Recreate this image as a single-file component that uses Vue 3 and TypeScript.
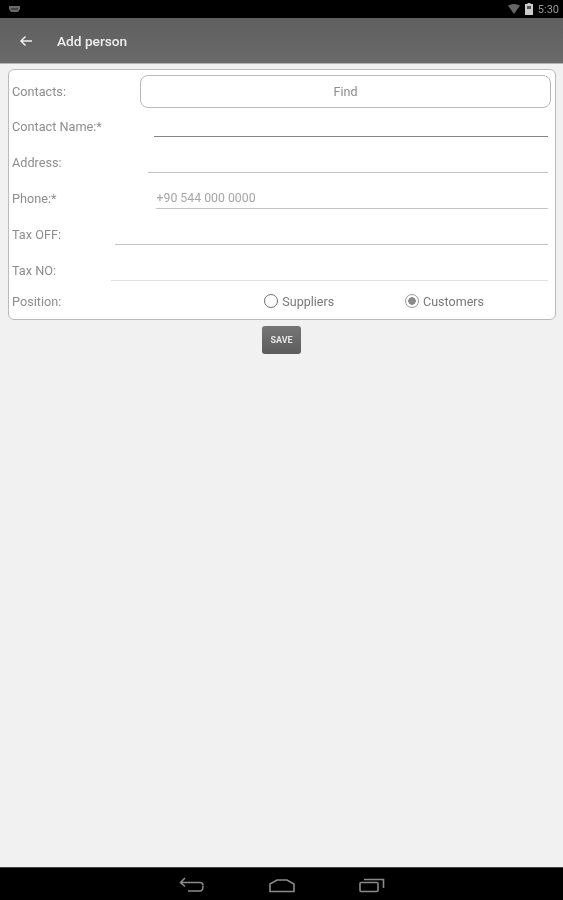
<template>
  <div class="screen">
    <div class="status-bar">
      <svg class="notif" width="13" height="7" viewBox="0 0 13 7">
        <path d="M1 0h11v3L10 6H3L1 3z" fill="#6a6a6a" />
        <rect x="3" y="2.500" width="7" height="1" fill="#222" />
      </svg>
      <div class="status-right">
        <svg width="12" height="10" viewBox="0 0 12 10">
          <path d="M0 1.500Q6 -1.500 12 1.500L6 10z" fill="#666" />
        </svg>
        <svg width="8" height="12" viewBox="0 0 8 12">
          <path d="M2.500 0h3v1H8v11H0V1h2.500z" fill="#ccc" />
          <rect x="2" y="3" width="4" height="3" fill="#555" />
        </svg>
        <span class="clock">5:30</span>
      </div>
    </div>

    <header class="app-bar">
      <svg class="back" width="14" height="12" viewBox="0 0 14 12">
        <path d="M13 6H2M6.500 1.500 2 6l4.500 4.500" fill="none" stroke="#eee" stroke-width="1.500" />
      </svg>
      <span class="title">Add person</span>
    </header>

    <main class="content">
      <form class="card" @submit.prevent>
        <div class="row-contacts">
          <span class="label">Contacts:</span>
          <button type="button" class="find">Find</button>
        </div>
        <div v-for="field in fields" :key="field.label" class="row" :class="field.cls">
          <span class="label">{{ field.label }}</span>
          <div class="input">{{ field.hint }}</div>
        </div>
        <div class="row-position">
          <span class="label">Position:</span>
          <label class="radio radio-suppliers"><i class="dot"></i>Suppliers</label>
          <label class="radio radio-customers"><i class="dot dot-on"></i>Customers</label>
        </div>
      </form>
      <button type="button" class="save">SAVE</button>
    </main>

    <nav class="nav-bar">
      <svg width="26" height="16" viewBox="0 0 26 16" fill="none" stroke="#8a8a8a" stroke-width="1.600">
        <path d="M24 8.500q0-3-3-3H2M6 1 1.500 5.500 6 9.500M9 14h12q3 0 3-5" />
      </svg>
      <svg width="26" height="16" viewBox="0 0 26 16" fill="none" stroke="#8a8a8a" stroke-width="1.600">
        <path d="M1 7 8 3h10l7 4v7.500H1z" />
      </svg>
      <svg width="26" height="16" viewBox="0 0 26 16" fill="none" stroke="#8a8a8a" stroke-width="1.600">
        <rect x="1" y="5.500" width="18" height="9" rx="1" />
        <path d="M5 2.500h19.500V11" />
      </svg>
    </nav>
  </div>
</template>

<script setup lang="ts">
interface Field {
  label: string;
  hint: string;
  cls: string;
}

const fields: Field[] = [
  { label: 'Contact Name:*', hint: '', cls: 'row-name' },
  { label: 'Address:', hint: '', cls: 'row-address' },
  { label: 'Phone:*', hint: '+90 544 000 0000', cls: 'row-phone' },
  { label: 'Tax OFF:', hint: '', cls: 'row-off' },
  { label: 'Tax NO:', hint: '', cls: 'row-no' },
];
</script>

<style>
html,
body {
  margin: 0;
  background: #f1f1f1;
}
</style>

<style scoped>
.screen {
  width: 563px;
  height: 900px;
  display: flex;
  flex-direction: column;
  background: #f1f1f1;
  font-family: Roboto, "Liberation Sans", sans-serif;
  overflow: hidden;
  filter: blur(0.4px);
}

.status-bar {
  height: 18px;
  background: #000;
  display: flex;
  align-items: center;
  justify-content: space-between;
  padding: 0 4px 0 8px;
  flex: none;
}

.status-right {
  display: flex;
  align-items: center;
  gap: 5px;
}

.clock {
  font-size: 11px;
  color: #999;
}

.app-bar {
  height: 46px;
  flex: none;
  display: flex;
  align-items: center;
  background: linear-gradient(#5f5f5f, #6a6a6a);
  border-bottom: 1px solid #b5b5b5;
  box-sizing: border-box;
  padding-left: 19px;
}

.title {
  margin-left: 24px;
  font-size: 13.700px;
  font-weight: 500;
  color: #eee;
}

.content {
  flex: 1;
  display: flex;
  flex-direction: column;
  align-items: flex-start;
  padding: 5px 7px 0 8px;
}

.card {
  width: 548px;
  height: 251px;
  box-sizing: border-box;
  background: #fff;
  border: 1px solid #bbb;
  border-radius: 6px;
  padding: 5px 4px 0 3px;
}

.row-contacts {
  height: 33px;
  display: flex;
  align-items: center;
  justify-content: space-between;
}

.row {
  height: 36px;
  display: flex;
  align-items: flex-end;
}

.label {
  font-size: 12.700px;
  color: #8d8d8d;
  line-height: 15px;
  white-space: nowrap;
}

.row .label {
  padding-bottom: 3px;
}

.find {
  width: 411px;
  height: 33px;
  box-sizing: border-box;
  background: #fff;
  border: 1px solid #b8b8b8;
  border-radius: 8px;
  font: inherit;
  font-size: 12.500px;
  color: #8d8d8d;
  padding: 0;
}

.input {
  flex: 1;
  box-sizing: border-box;
  height: 22px;
  margin-right: 3px;
  border-bottom: 1px solid #c4c4c4;
  font-size: 12.300px;
  color: #a6a6a6;
  line-height: 15px;
  padding: 4px 0 0 1px;
}

.row-name {
  height: 29px;
}

.row-name .input { margin-left: 52px; border-bottom-color: #858585; }
.row-address .input { margin-left: 86px; }
.row-phone .input { margin-left: 99px; }
.row-off .input { margin-left: 54px; }
.row-no .input { margin-left: 55px; border-bottom-color: #e2e2e2; }

.row-position {
  display: flex;
  align-items: center;
  height: 37px;
  padding-top: 3px;
  box-sizing: border-box;
}

.radio {
  display: flex;
  align-items: center;
  gap: 4px;
  font-size: 12.500px;
  color: #777;
}

.radio-suppliers {
  margin-left: 203px;
}

.radio-customers {
  margin-left: 71px;
}

.dot {
  width: 14px;
  height: 14px;
  box-sizing: border-box;
  border: 1.500px solid #707070;
  border-radius: 50%;
}

.dot-on {
  background: radial-gradient(circle, #8a8a8a 0 3.500px, #fff 4px);
  border-color: #999;
}

.save {
  margin: 6px 0 0 254px;
  width: 39px;
  height: 28px;
  border: 0;
  border-radius: 3px;
  background: linear-gradient(#767676, #5c5c5c);
  color: #e4e4e4;
  font: inherit;
  font-size: 9px;
  font-weight: 700;
  padding: 0;
}

.nav-bar {
  height: 33px;
  flex: none;
  background: #000;
  display: flex;
  align-items: center;
  justify-content: center;
  gap: 64px;
  padding-top: 2px;
  box-sizing: border-box;
  border-top: 1px solid #444;
}
</style>
